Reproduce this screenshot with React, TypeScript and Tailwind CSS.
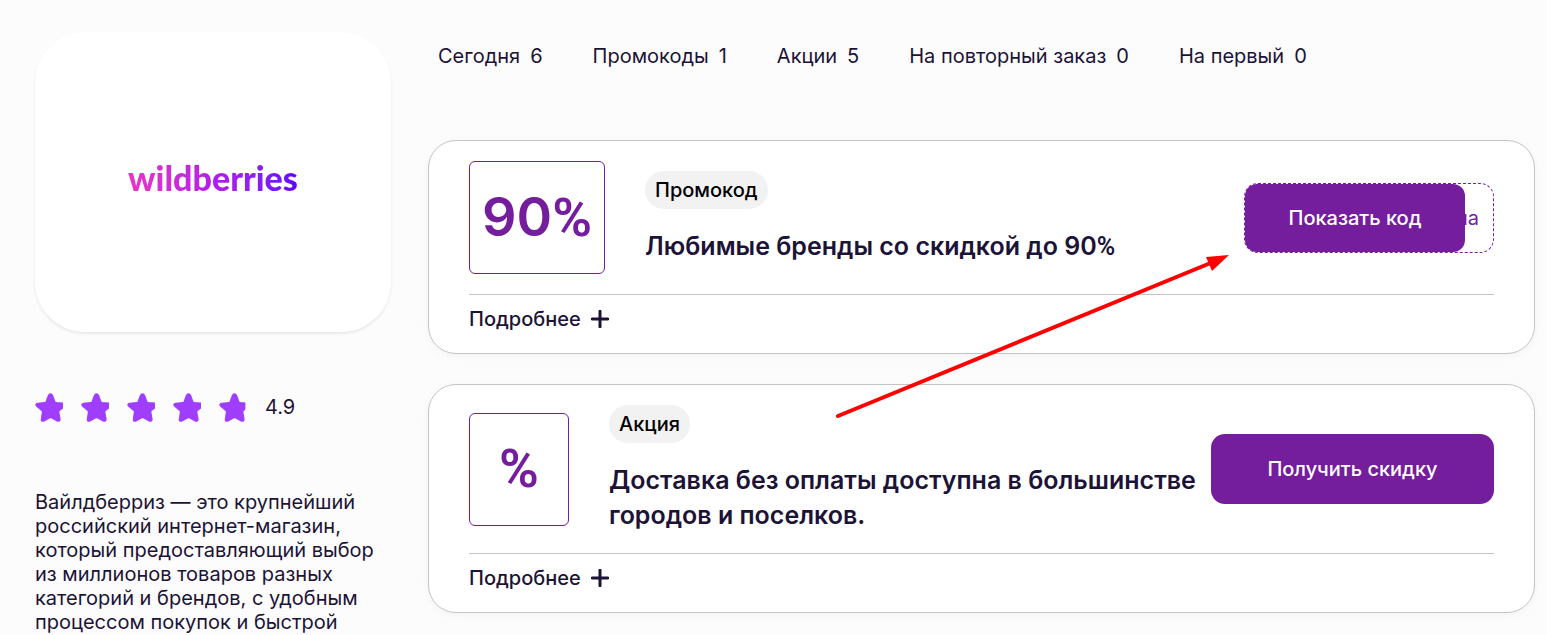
import { ReactNode } from "react";

const filters = [
  { label: "Сегодня", count: 6 },
  { label: "Промокоды", count: 1 },
  { label: "Акции", count: 5 },
  { label: "На повторный заказ", count: 0 },
  { label: "На первый", count: 0 },
];

function Star({ part = 1 }: { part?: number }) {
  return (
    <svg width="28" height="30" viewBox="0 0 28 30" aria-hidden="true">
      <svg width={28 * part} height="30">
        <path
          d="M15.5 2.2C16.3 2.2 17 3 17.4 4L19.4 9.6C19.8 10.6 20.6 11 21.6 11.1L28.5 11.6C30.5 12 30.6 13.2 29 14.4L24.4 18C23.5 18.7 23.2 19.3 23.4 20.4L24.6 27C24.8 28.8 23.8 29.2 22.4 28.5L17 25.6C16 25.1 15.2 25.1 14.2 25.6L8.8 28.5C7.3 29.2 6.5 28.6 6.8 27L7.8 20.4C8 19.3 7.7 18.7 6.8 18L2 14C.8 12.9 1.2 11.9 2.7 11.7L9.6 11.1C10.6 11 11.2 10.6 11.6 9.6L13.6 4C14 3 14.7 2.2 15.5 2.2Z"
          fill="#9f3eff"
          stroke="#9f3eff"
          strokeWidth="2"
          strokeLinejoin="round"
        />
      </svg>
    </svg>
  );
}

// narrow percent sign next to the wide Inter digits
function Percent() {
  return <span className="font-['Roboto']">%</span>;
}

function StoreInfo() {
  return (
    <aside className="w-[356px] shrink-0">
      <div className="flex h-[300px] items-center justify-center rounded-[50px] bg-white pb-2 shadow-[0_2px_3px_rgba(0,0,0,0.08)]">
        <span className="bg-linear-to-r from-[#e935c8] via-[#b51be6] to-[#6200ff] bg-clip-text font-['Lato'] text-[34px] leading-10 font-black text-transparent">
          wildberries
        </span>
      </div>

      <div className="mt-[60px] flex items-center gap-[18px]">
        <Star />
        <Star />
        <Star />
        <Star />
        <Star part={0.94} />
        <span className="text-[20px] leading-6">4.9</span>
      </div>

      <p className="mt-[68px] text-[20px] leading-6">
        Вайлдберриз — это крупнейший российский интернет-магазин, который предоставляющий выбор из миллионов товаров
        разных категорий и брендов, с удобным процессом покупок и быстрой
      </p>
    </aside>
  );
}

type OfferProps = {
  discount: ReactNode;
  tag: string;
  title: ReactNode;
  action: ReactNode;
};

function Offer({ discount, tag, title, action }: OfferProps) {
  return (
    <article className="rounded-[28px] border border-[#c4c4c4] bg-white px-10 pt-5 shadow-[0_2px_8px_rgba(0,0,0,0.04)]">
      <div className="flex items-center gap-2 border-b border-[#c4c4c4] pb-5">
        <div className="flex flex-1 items-center gap-10">
          <div className="flex h-[113px] min-w-[100px] shrink-0 items-center justify-center rounded-md border border-[#741e9e] px-3 text-[54px] leading-none font-semibold text-[#741e9e]">
            {discount}
          </div>
          <div>
            <span className="inline-flex h-[38px] items-center rounded-full bg-[#f2f2f2] px-[10px] align-top text-[20px] font-medium text-black">
              {tag}
            </span>
            <h2 className="mt-5 text-[25px] leading-[35px] font-semibold">{title}</h2>
          </div>
        </div>
        {action}
      </div>
      <button type="button" className="flex h-[58px] items-center gap-[10px] pb-[10px] text-[20px] font-medium">
        Подробнее
        <svg width="18" height="18" viewBox="0 0 18 18" aria-hidden="true">
          <path d="M9 1.2V16.8M1.2 9H16.8" stroke="currentColor" strokeWidth="3" strokeLinecap="round" />
        </svg>
      </button>
    </article>
  );
}

function CodeButton() {
  return (
    <button
      type="button"
      className="relative flex h-[70px] w-[250px] shrink-0 items-center justify-end rounded-[14px] border border-dashed border-[#741e9e] pr-[14px] text-[20px] text-[#741e9e]"
    >
      на
      <span className="absolute inset-y-0 left-0 flex w-[220px] items-center justify-center rounded-xl bg-[#741e9e] font-medium text-white">
        Показать код
      </span>
    </button>
  );
}

export default function App() {
  return (
    <main className="flex min-h-screen gap-[37px] bg-[#fcfcfc] pt-8 pr-3 pl-[35px] font-['Inter',sans-serif] text-[#1c1336]">
      <StoreInfo />

      <div className="min-w-0 flex-1">
        <nav className="flex gap-[50px] pt-3 pl-[10px] text-[20px] leading-6">
          {filters.map((f) => (
            <a key={f.label} href="#offers" className="flex gap-[10px]">
              {f.label}
              <span>{f.count}</span>
            </a>
          ))}
        </nav>

        <section id="offers" className="relative mt-[72px] flex flex-col gap-[30px]">
          <Offer
            discount={<span>90<Percent /></span>}
            tag="Промокод"
            title={<>Любимые бренды со скидкой до 90<Percent /></>}
            action={<CodeButton />}
          />
          <Offer
            discount={<Percent />}
            tag="Акция"
            title="Доставка без оплаты доступна в большинстве городов и поселков."
            action={
              <button
                type="button"
                className="h-[70px] w-[283px] shrink-0 rounded-[14px] bg-[#741e9e] text-[20px] font-medium text-white"
              >
                Получить скидку
              </button>
            }
          />

          {/* pointer to the code button */}
          <svg
            width="396"
            height="166"
            viewBox="0 0 396 166"
            className="pointer-events-none absolute top-[113px] right-[306px]"
            aria-hidden="true"
          >
            <path d="M5 163 380 9" stroke="#ff0000" strokeWidth="4" strokeLinecap="round" />
            <path d="M396 2 373 4 379 18Z" fill="#ff0000" />
          </svg>
        </section>
      </div>
    </main>
  );
}
